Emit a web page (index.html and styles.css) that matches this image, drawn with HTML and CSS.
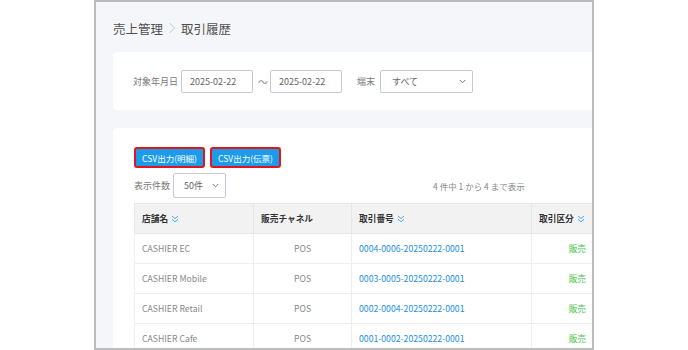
FILE: index.html
```html
<!DOCTYPE html>
<html lang="ja">
<head>
  <meta charset="UTF-8" />
  <title>取引履歴</title>
  <link rel="stylesheet" href="styles.css">
</head>
<body>
  <div class="frame">
    <div class="page">
      <div class="crumbs">
        <span>売上管理</span>
        <svg class="crumb-sep" width="8" height="12" viewBox="0 0 8 12"><polyline points="1.5,1 6.5,6 1.5,11" fill="none" stroke="#c4c6cc" stroke-width="1"/></svg>
        <span>取引履歴</span>
      </div>

      <div class="card filter">
        <label class="lbl">対象年月日</label>
        <div class="field date">2025-02-22</div>
        <span class="tilde">～</span>
        <div class="field date">2025-02-22</div>
        <label class="lbl term">端末</label>
        <div class="field select wide">
          <span>すべて</span>
          <svg width="7" height="5" viewBox="0 0 7 5"><polyline points="0.8,1 3.5,3.8 6.2,1" fill="none" stroke="#777" stroke-width="1"/></svg>
        </div>
      </div>

      <div class="card list">
        <div class="actions">
          <button class="btn">CSV出力(明細)</button>
          <button class="btn">CSV出力(伝票)</button>
        </div>
        <div class="pager">
          <label class="lbl">表示件数</label>
          <div class="field select small">
            <span>50件</span>
            <svg width="7" height="5" viewBox="0 0 7 5"><polyline points="0.8,1 3.5,3.8 6.2,1" fill="none" stroke="#777" stroke-width="1"/></svg>
          </div>
          <span class="info">4 件中 1 から 4 まで表示</span>
        </div>

        <table class="grid">
          <thead>
            <tr>
              <th class="c1">店舗名 <svg class="sort" width="8" height="8" viewBox="0 0 8 8"><polyline points="1,1 4,3.6 7,1" /><polyline points="1,4.2 4,6.8 7,4.2" /></svg></th>
              <th class="c2">販売チャネル</th>
              <th class="c3">取引番号 <svg class="sort" width="8" height="8" viewBox="0 0 8 8"><polyline points="1,1 4,3.6 7,1" /><polyline points="1,4.2 4,6.8 7,4.2" /></svg></th>
              <th class="c4">取引区分 <svg class="sort" width="8" height="8" viewBox="0 0 8 8"><polyline points="1,1 4,3.6 7,1" /><polyline points="1,4.2 4,6.8 7,4.2" /></svg></th>
            </tr>
          </thead>
          <tbody>
            <tr>
              <td>CASHIER EC</td>
              <td class="center">POS</td>
              <td><a href="#">0004-0006-20250222-0001</a></td>
              <td class="kind">販売</td>
            </tr>
            <tr>
              <td>CASHIER Mobile</td>
              <td class="center">POS</td>
              <td><a href="#">0003-0005-20250222-0001</a></td>
              <td class="kind">販売</td>
            </tr>
            <tr>
              <td>CASHIER Retail</td>
              <td class="center">POS</td>
              <td><a href="#">0002-0004-20250222-0001</a></td>
              <td class="kind">販売</td>
            </tr>
            <tr>
              <td>CASHIER Cafe</td>
              <td class="center">POS</td>
              <td><a href="#">0001-0002-20250222-0001</a></td>
              <td class="kind">販売</td>
            </tr>
          </tbody>
        </table>
      </div>
    </div>
  </div>
</body>
</html>
```

FILE: styles.css
```css
body {
  margin: 0;
  background: #fff;
  font-family: "Noto Sans CJK JP", "Noto Sans", sans-serif;
  color: #555;
}

.frame {
  margin-left: 94px;
  width: 496px;
  height: 346px;
  border: 2px solid #bcbcbc;
  background: #f5f6fa;
  overflow: hidden;
}

.page {
  width: 640px;
  padding-left: 17px;
}

.crumbs {
  display: flex;
  align-items: center;
  gap: 5px;
  margin-top: 16px;
  height: 20px;
  font-size: 12.5px;
  color: #505050;
}

.card {
  background: #fff;
  border-radius: 4px;
}

.filter {
  display: flex;
  align-items: center;
  margin-top: 14px;
  padding: 18px 0 17px 20px;
}

.lbl {
  font-size: 9px;
  color: #777;
}

.field {
  box-sizing: border-box;
  height: 23px;
  border: 1px solid #c6c8d6;
  border-radius: 2px;
  background: #fff;
  font-size: 9px;
  color: #666;
  display: flex;
  align-items: center;
  padding-left: 8px;
}

.date {
  width: 72px;
  margin-left: 3px;
}

.filter .date + .tilde + .date {
  margin-left: 2px;
}

.tilde {
  margin-left: 5px;
  font-size: 10px;
  color: #888;
}

.term {
  margin-left: 15px;
}

.select {
  justify-content: space-between;
  padding-right: 6px;
}

.wide {
  width: 93px;
  margin-left: 5px;
  padding-left: 11px;
}

.list {
  margin-top: 18px;
  padding: 19px 0 0 21px;
}

.actions {
  display: flex;
  gap: 5px;
}

.btn {
  box-sizing: border-box;
  height: 21px;
  width: 71px;
  padding: 0;
  background: #1b9be9;
  border: 2px solid #e3141c;
  border-radius: 3px;
  color: #fff;
  font-family: inherit;
  font-size: 8.5px;
  white-space: nowrap;
}

.pager {
  display: flex;
  align-items: center;
  margin-top: 5px;
}

.small {
  width: 53px;
  height: 25px;
  margin-left: 3px;
  padding-left: 10px;
}

.info {
  margin-left: 207px;
  font-size: 8.5px;
  color: #888;
}

.grid {
  margin-top: 5px;
  border-collapse: collapse;
  font-size: 8.7px;
}

.grid th,
.grid td {
  box-sizing: border-box;
  height: 30px;
  padding: 0 7px;
  border: 1px solid #eceef3;
  text-align: left;
  white-space: nowrap;
}

.grid th {
  background: #f2f2f3;
  color: #333;
  font-weight: bold;
  border-color: #e6e6ea;
}

.grid td {
  color: #888;
}

.c1 { width: 119px; }
.c2 { width: 98px; }
.c3 { width: 180px; }
.c4 { width: 62px; }

.sort {
  vertical-align: -1px;
  margin-left: 1px;
}

.sort polyline {
  fill: none;
  stroke: #4aa8f0;
  stroke-width: 1;
}

.grid .center {
  text-align: center;
}

.grid a {
  color: #1d8fe3;
  text-decoration: none;
}

.grid .kind {
  text-align: right;
  color: #4cc54c;
}
```
